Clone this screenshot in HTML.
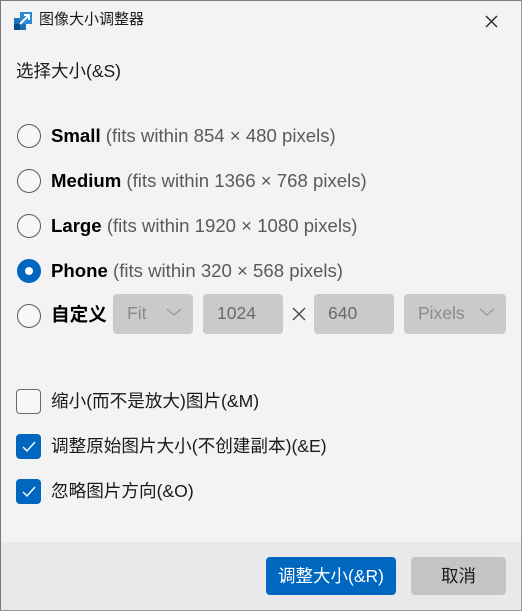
<!DOCTYPE html>
<html><head><meta charset="utf-8"><style>
*{margin:0;padding:0;box-sizing:border-box}
body{width:522px;height:611px;overflow:hidden;background:#f3f3f3;font-family:"Liberation Sans","Noto Sans CJK SC",sans-serif;color:#1a1a1a;position:relative}
.frame{position:absolute;left:0;top:0;width:522px;height:611px;border:1px solid #7a7a7a;border-right-color:#9a9a9a;border-bottom-color:#9a9a9a;pointer-events:none;z-index:5}
.abs{position:absolute;white-space:nowrap}
.radio{position:absolute;left:17px;width:24px;height:24px;border-radius:50%;border:1.5px solid #5a5a5a;background:#f7f7f7}
.radio.on{background:#0067c0;border-color:#0067c0}
.radio.on::after{content:"";position:absolute;left:6.5px;top:6.5px;width:8px;height:8px;border-radius:50%;background:#fff}
.lbl{position:absolute;left:51px;font-size:18.6px;line-height:20px;white-space:nowrap}
.lbl b{color:#000}
.lbl span{color:#5a5a5a}
.box{position:absolute;top:294px;height:40px;background:#cacaca;border-radius:4px;color:#8a8a8a;font-size:17.5px;line-height:38px;padding-left:14px}
.box.val{color:#6a6a6a}
.chev{position:absolute;top:13px;width:16px;height:10px}
.cb{position:absolute;left:16px;width:25px;height:25px;border-radius:4px}
.cb.off{border:1.5px solid #6a6a6a;background:#f7f7f7}
.cb.on{background:#0067c0}
.cbl{position:absolute;left:51px;font-size:17.6px;line-height:20px;color:#1a1a1a;white-space:nowrap}
</style></head><body>
<div class="frame"></div>
<svg class="abs" style="left:14px;top:12px" width="18" height="18" viewBox="0 0 18 18"><rect x="0" y="6" width="12" height="12" fill="#1d6fb8"/><rect x="0" y="12" width="6" height="6" fill="#0b4d8a"/><rect x="6" y="0" width="12" height="12" fill="#2a8ad8"/><path d="M6 12 L15 3 M10 3 H15 V8" stroke="#fff" stroke-width="2" fill="none"/></svg>
<div class="abs" style="left:39px;top:10px;font-size:15px;line-height:19px">图像大小调整器</div>
<svg class="abs" style="left:485px;top:15px" width="13" height="13" viewBox="0 0 13 13"><path d="M1 1L12 12M12 1L1 12" stroke="#222" stroke-width="1.3"/></svg>
<div class="abs" style="left:16px;top:60px;font-size:17.5px;line-height:22px">选择大小(&amp;S)</div>

<div class="radio" style="top:124px"></div><div class="lbl" style="top:126px"><b>Small</b> <span>(fits within 854 × 480 pixels)</span></div>
<div class="radio" style="top:169px"></div><div class="lbl" style="top:171px"><b>Medium</b> <span>(fits within 1366 × 768 pixels)</span></div>
<div class="radio" style="top:214px"></div><div class="lbl" style="top:216px"><b>Large</b> <span>(fits within 1920 × 1080 pixels)</span></div>
<div class="radio on" style="top:259px"></div><div class="lbl" style="top:261px"><b>Phone</b> <span>(fits within 320 × 568 pixels)</span></div>
<div class="radio" style="top:304px"></div><div class="lbl" style="top:305px"><b>自定义</b></div>

<div class="box" style="left:113px;width:80px">Fit<svg class="chev" style="left:53px" viewBox="0 0 16 10"><path d="M1 2L8 8L15 2" stroke="#999" stroke-width="1.3" fill="none"/></svg></div>
<div class="box val" style="left:203px;width:80px">1024</div>
<svg class="abs" style="left:292px;top:307px" width="14" height="14" viewBox="0 0 14 14"><path d="M1 1L13 13M13 1L1 13" stroke="#444" stroke-width="1.3"/></svg>
<div class="box val" style="left:314px;width:80px">640</div>
<div class="box" style="left:404px;width:102px">Pixels<svg class="chev" style="left:75px" viewBox="0 0 16 10"><path d="M1 2L8 8L15 2" stroke="#999" stroke-width="1.3" fill="none"/></svg></div>

<div class="cb off" style="top:389px"></div><div class="cbl" style="top:391px">缩小(而不是放大)图片(&amp;M)</div>
<div class="cb on" style="top:434px"><svg width="25" height="25" viewBox="0 0 25 25"><path d="M7 13L11 17L19 8" stroke="#fff" stroke-width="1.4" fill="none"/></svg></div><div class="cbl" style="top:436px">调整原始图片大小(不创建副本)(&amp;E)</div>
<div class="cb on" style="top:479px"><svg width="25" height="25" viewBox="0 0 25 25"><path d="M7 13L11 17L19 8" stroke="#fff" stroke-width="1.4" fill="none"/></svg></div><div class="cbl" style="top:481px">忽略图片方向(&amp;O)</div>

<div class="abs" style="left:0;top:542px;width:522px;height:69px;background:#e9e9e9"></div>
<div class="abs" style="left:266px;top:557px;width:130px;height:38px;background:#0067c0;border-radius:4px;color:#fff;font-size:17.5px;line-height:38px;text-align:center">调整大小(&amp;R)</div>
<div class="abs" style="left:411px;top:557px;width:95px;height:38px;background:#c4c4c4;border-radius:4px;color:#1a1a1a;font-size:17.5px;line-height:38px;text-align:center">取消</div>
</body></html>
